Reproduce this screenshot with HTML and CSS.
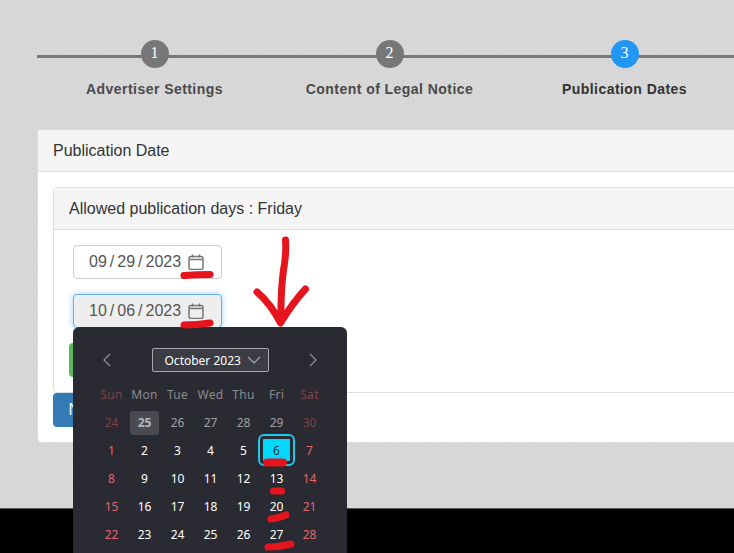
FILE: index.html
```html
<!DOCTYPE html>
<html lang="en">
<head>
  <meta charset="UTF-8" />
  <title>Publication Dates</title>
  <link rel="stylesheet" href="styles.css">
</head>
<body>
<div class="page">

  <div class="content">
    <div class="steps">
      <div class="step">
        <span class="step-num">1</span>
        <span class="step-label">Advertiser Settings</span>
      </div>
      <div class="step">
        <span class="step-num">2</span>
        <span class="step-label">Content of Legal Notice</span>
      </div>
      <div class="step active">
        <span class="step-num">3</span>
        <span class="step-label">Publication Dates</span>
      </div>
    </div>

    <div class="panel">
      <div class="panel-heading">Publication Date</div>
      <div class="panel-body">
        <div class="panel inner">
          <div class="panel-heading">Allowed publication days : Friday</div>
          <div class="panel-body">
            <div class="date-input">
              <span>09</span><i>/</i><span>29</span><i>/</i><span>2023</span>
              <svg class="cal-icon" viewBox="0 0 16 16"><path d="M1.5 5.5h13M4.5 .5v3M11.5 .5v3" /><rect x="1" y="2.5" width="14" height="13" rx="2" /></svg>
            </div>
            <div class="date-input focused">
              <span>10</span><i>/</i><span>06</span><i>/</i><span>2023</span>
              <svg class="cal-icon" viewBox="0 0 16 16"><path d="M1.5 5.5h13M4.5 .5v3M11.5 .5v3" /><rect x="1" y="2.5" width="14" height="13" rx="2" /></svg>

              <!-- date picker popup -->
              <div class="picker">
                <div class="picker-head">
                  <svg class="chev" viewBox="0 0 10 14"><path d="M8 1L2 7l6 6" /></svg>
                  <div class="month-select">October 2023
                    <svg viewBox="0 0 14 8"><path d="M1 1l6 6 6-6" /></svg>
                  </div>
                  <svg class="chev" viewBox="0 0 10 14"><path d="M2 1l6 6-6 6" /></svg>
                </div>
                <div class="cal-grid">
                  <b class="dow end">Sun</b><b class="dow">Mon</b><b class="dow">Tue</b><b class="dow">Wed</b><b class="dow">Thu</b><b class="dow">Fri</b><b class="dow end">Sat</b>
                  <span class="off end">24</span><span class="today">25</span><span class="off">26</span><span class="off">27</span><span class="off">28</span><span class="off">29</span><span class="off end">30</span>
                  <span class="end">1</span><span>2</span><span>3</span><span>4</span><span>5</span><span class="selected">6</span><span class="end">7</span>
                  <span class="end">8</span><span>9</span><span>10</span><span>11</span><span>12</span><span>13</span><span class="end">14</span>
                  <span class="end">15</span><span>16</span><span>17</span><span>18</span><span>19</span><span>20</span><span class="end">21</span>
                  <span class="end">22</span><span>23</span><span>24</span><span>25</span><span>26</span><span>27</span><span class="end">28</span>
                </div>
              </div>
            </div>
            <button class="btn btn-green">Add</button>
          </div>
        </div>
        <button class="btn btn-blue">Next</button>
      </div>
    </div>
  </div>

  <div class="footer"></div>

  <!-- red marker scribbles on top of the screenshot -->
  <svg class="marks" viewBox="0 0 734 553">
    <path d="M184 275.5q13 -1 26 -1" />
    <path d="M184 325q13 0 26 -2" />
    <path d="M285.5 240q1 14 -2 30q-3 22 -2.500 52M257 292q14 12 23.500 31q12 -20 25 -34" />
    <path d="M267 462.500h16" stroke-width="8" />
    <path d="M273.500 491h8" stroke-width="7" />
    <path d="M271 519q8 -1 15 -4" />
    <path d="M268 547q12 0 23 -3" />
  </svg>
</div>
</body>
</html>
```
FILE: styles.css
```css
* {
  box-sizing: border-box;
}

body {
  margin: 0;
  font-family: "Liberation Sans", Arial, sans-serif;
  font-size: 16px;
  color: #333;
}

.page {
  position: relative;
  display: flex;
  flex-direction: column;
  height: 100vh;
  overflow: hidden;
  background-color: #d7d7d7;
  background-image:
    repeating-linear-gradient(90deg, rgba(255,255,255,.04) 0 1px, transparent 1px 5px),
    repeating-linear-gradient(0deg, rgba(0,0,0,.008) 0 1px, transparent 1px 6px);
}

.content {
  flex: none;
  width: 900px;
  padding-left: 37px;
}

/* Stepper */
.steps {
  position: relative;
  display: flex;
  padding-top: 40px;
  height: 129px;
}

.steps::before {
  content: "";
  position: absolute;
  left: 0;
  right: 0;
  top: 55px;
  height: 3px;
  background: #777;
}

.step {
  position: relative;
  display: flex;
  flex-direction: column;
  align-items: center;
  width: 235px;
}

.step-num {
  width: 28px;
  height: 28px;
  line-height: 26px;
  border-radius: 50%;
  background: #777;
  color: #fff;
  text-align: center;
  font-family: "Liberation Serif", serif;
  font-size: 16px;
}

.step-label {
  margin-top: 13px;
  font-size: 14px;
  line-height: 16px;
  font-weight: bold;
  letter-spacing: .45px;
  color: #4a4a4a;
}

.step.active .step-num {
  background: #2196f3;
}

.step.active .step-label {
  color: #333;
}

/* Panels */
.panel {
  background: #fff;
  border: 1px solid #ddd;
  border-radius: 4px;
}

.panel-heading {
  height: 42px;
  padding: 11px 15px 9px;
  line-height: 20px;
  background: #f5f5f5;
  border-bottom: 1px solid #ddd;
}

.panel-body {
  padding: 15px;
}

/* Date fields */
.date-input {
  position: relative;
  display: flex;
  align-items: center;
  width: 149px;
  height: 34px;
  margin: 0 0 15px 4px;
  padding-left: 15px;
  border: 1px solid #ccc;
  border-radius: 4px;
  color: #555;
}

.date-input i {
  margin: 0 3px;
  font-style: normal;
}

.date-input.focused {
  background: #eee;
  border-color: #66afe9;
  box-shadow: 0 0 6px rgba(102,175,233,.6);
}

.cal-icon {
  width: 16px;
  height: 16px;
  margin-left: 7px;
  fill: none;
  stroke: #777;
  stroke-width: 1.5;
}

.btn {
  display: block;
  height: 34px;
  padding: 6px 12px;
  border: 1px solid transparent;
  border-radius: 4px;
  color: #fff;
  font: inherit;
}

.btn-green {
  width: 60px;
  background: #5cb85c;
}

.btn-blue {
  width: 64px;
  background: #337ab7;
}

/* Date picker */
.picker {
  position: absolute;
  z-index: 2;
  left: -1px;
  top: 32px;
  width: 274px;
  height: 240px;
  padding: 21px 22px 0;
  background: #2a2a33;
  border-radius: 6px;
  font-family: "Noto Sans", "Open Sans", sans-serif;
  font-size: 12px;
}

.picker-head {
  display: flex;
  align-items: center;
  justify-content: space-between;
  padding: 0 7px;
  height: 24px;
}

.chev {
  width: 10px;
  height: 14px;
  fill: none;
  stroke: #8e8e96;
  stroke-width: 1.3;
}

.month-select {
  display: flex;
  align-items: center;
  justify-content: space-between;
  width: 117px;
  height: 24px;
  padding: 0 7px 0 12px;
  background: #3c3c45;
  border: 1px solid #a8a8ae;
  border-radius: 2px;
  color: #fff;
}

.month-select svg {
  width: 14px;
  height: 8px;
  fill: none;
  stroke: #a8a8ae;
  stroke-width: 1.2;
}

.cal-grid {
  display: grid;
  grid-template-columns: repeat(7, 33px);
  grid-auto-rows: 28px;
  margin-top: 9px;
  color: #fff;
  text-align: center;
  line-height: 28px;
}

.cal-grid span {
  position: relative;
}

.dow {
  font-weight: normal;
  color: #8a8a91;
  letter-spacing: .3px;
}

.cal-grid .end {
  color: #e0666c;
}

.cal-grid .off {
  color: #a0a0a6;
}

.cal-grid .off.end,
.cal-grid .dow.end {
  color: #7d4349;
}

.today {
  margin: 2px;
  line-height: 24px;
  border-radius: 3px;
  background: #4a4a53;
  color: #b5b5ba;
  font-weight: bold;
}

.selected {
  z-index: 0;
  color: #333;
}

.selected::before {
  content: "";
  position: absolute;
  z-index: -1;
  left: 0;
  right: 0;
  top: -1px;
  bottom: 1px;
  background: #00d8ff;
  border: 3px solid #2a2a33;
  outline: 2px solid #1ec8ee;
  border-radius: 4px;
}

.footer {
  flex: 1;
  margin-top: 65px;
  background: #000;
  border-top: 1px solid #555;
}

.marks {
  position: absolute;
  z-index: 3;
  left: 0;
  top: 0;
  width: 734px;
  height: 553px;
  fill: none;
  stroke: #e5141d;
  stroke-width: 7;
  stroke-linecap: round;
  stroke-linejoin: round;
  pointer-events: none;
}
```
